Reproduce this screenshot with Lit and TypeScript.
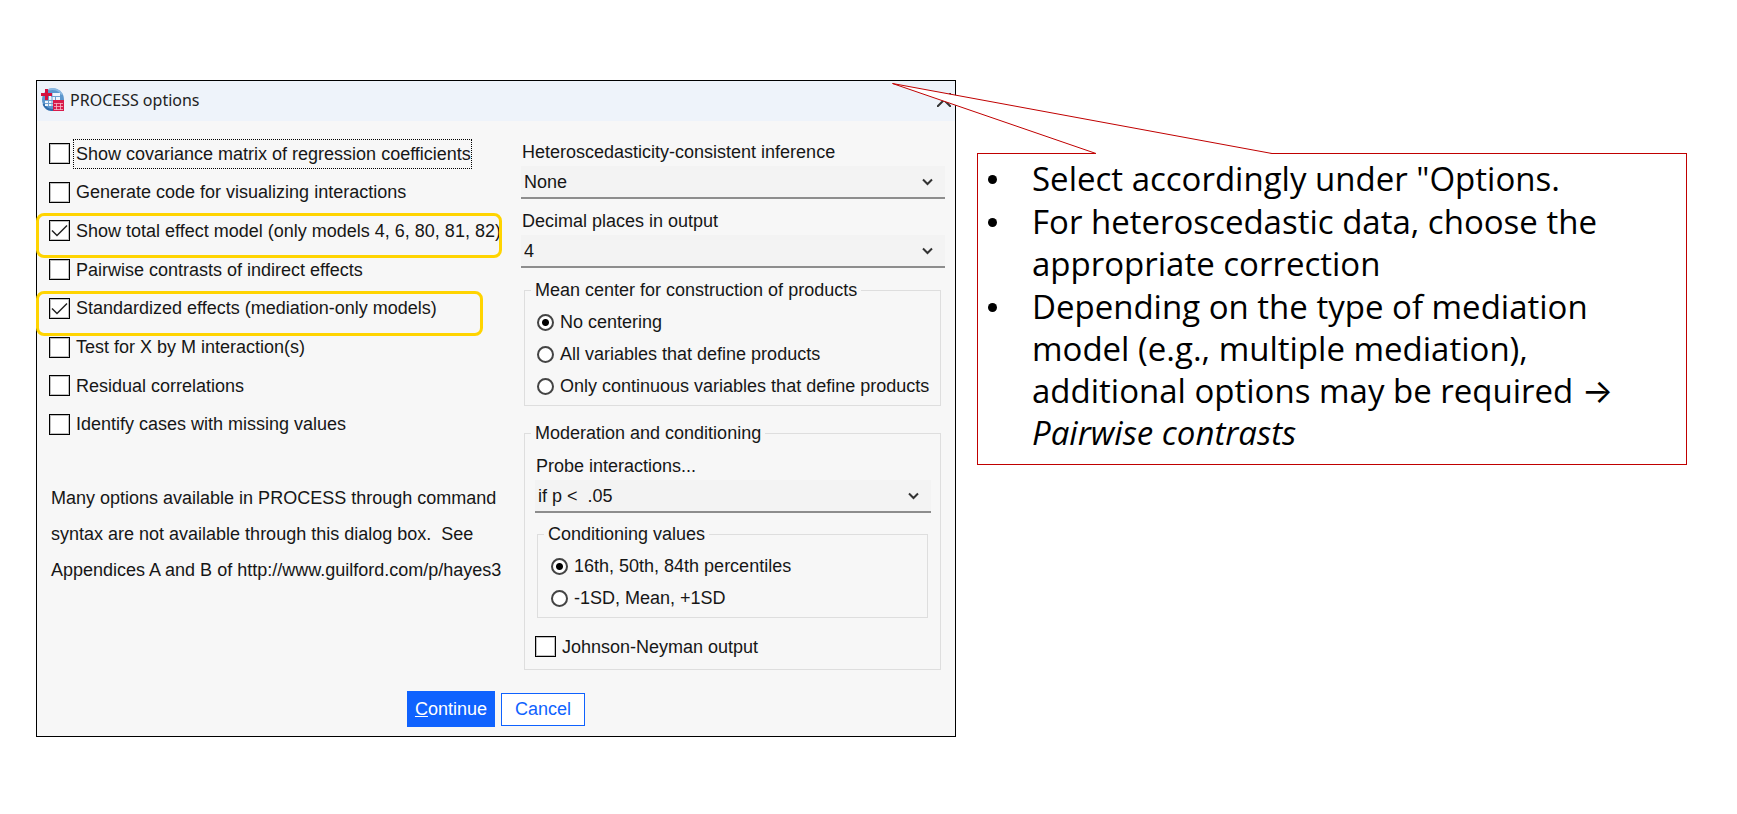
import { LitElement, html, css, svg } from "lit";
import { customElement } from "lit/decorators.js";

interface Choice {
  id: string;
  label: string;
  checked?: boolean;
  mark?: "wide" | "narrow";
  focused?: boolean;
}

const OPTIONS: Choice[] = [
  { id: "cov", label: "Show covariance matrix of regression coefficients", focused: true },
  { id: "code", label: "Generate code for visualizing interactions" },
  { id: "total", label: "Show total effect model (only models 4, 6, 80, 81, 82)", checked: true, mark: "wide" },
  { id: "pair", label: "Pairwise contrasts of indirect effects" },
  { id: "std", label: "Standardized effects (mediation-only models)", checked: true, mark: "narrow" },
  { id: "xm", label: "Test for X by M interaction(s)" },
  { id: "resid", label: "Residual correlations" },
  { id: "missing", label: "Identify cases with missing values" },
];

const CENTERING: Choice[] = [
  { id: "c-none", label: "No centering", checked: true },
  { id: "c-all", label: "All variables that define products" },
  { id: "c-cont", label: "Only continuous variables that define products" },
];

const CONDITIONING: Choice[] = [
  { id: "v-pct", label: "16th, 50th, 84th percentiles", checked: true },
  { id: "v-sd", label: "-1SD, Mean, +1SD" },
];

const NOTE = `Many options available in PROCESS through command
syntax are not available through this dialog box.  See
Appendices A and B of http://www.guilford.com/p/hayes3`;

const chevron = svg`<path d="M1 1.5 5.5 6 10 1.5" fill="none" stroke="#333" stroke-width="2"/>`;

@customElement("process-dialog")
export class ProcessDialog extends LitElement {
  static styles = css`
    :host {
      display: block;
      font: 18px/20px "Liberation Sans", Arial, sans-serif;
      color: #161616;
    }
    * { box-sizing: border-box; }
    .dialog { border: 1px solid #000; background: #f7f7f7; }
    .title {
      display: flex;
      align-items: center;
      gap: 6px;
      height: 40px;
      padding: 0 4px 3px;
      background: #eef3fa;
    }
    .title h1 {
      flex: 1;
      margin: 0;
      font: 16px/20px "Noto Sans", sans-serif;
      color: #222;
    }
    .close { display: flex; padding: 0; border: 0; background: none; }
    .body {
      display: grid;
      grid-template-columns: 472px minmax(0, 1fr);
      padding: 22px 10px 0 12px;
    }
    .options {
      display: flex;
      flex-direction: column;
      justify-content: space-between;
      min-height: 292px;
      margin: 0;
      padding: 0;
      list-style: none;
    }
    .row { position: relative; display: flex; align-items: center; gap: 4px; white-space: nowrap; }
    .row label { padding: 0 1px 0 2px; }
    .row .focused { margin: -5px 0 -5px -1px; padding: 4px 0 4px 2px; border: 1px dotted #000; }
    .mark {
      position: absolute;
      top: -7px;
      left: -13px;
      height: 45px;
      border: 3px solid #ffd400;
      border-radius: 8px;
      pointer-events: none;
    }
    .wide { width: 466px; }
    .narrow { width: 447px; }
    input { appearance: none; flex: none; margin: 0; background: #fff; }
    input[type="checkbox"] { width: 21px; height: 21px; border: 1px solid #000; box-shadow: inset 0 0 0 1px #8888; }
    input[type="checkbox"]:checked {
      background: #fff url('data:image/svg+xml,<svg xmlns="http://www.w3.org/2000/svg" viewBox="0 0 19 19"><path d="M2 9.5 7 14.500 17 4.500" fill="none" stroke="%23222" stroke-width="1.500"/></svg>');
    }
    input[type="radio"] {
      width: 17px;
      height: 17px;
      border: 2px solid #444;
      border-radius: 50%;
    }
    input[type="radio"]:checked { background: radial-gradient(circle, #000 3px, #fff 4px); }
    .note { margin: 45px 0 0 2px; line-height: 36px; white-space: pre; }
    .field { display: flex; flex-direction: column; }
    .field label { padding: 0 1px; }
    .field + .field { margin-top: 12px; }
    .select { position: relative; display: grid; margin-top: 4px; }
    .select svg { position: absolute; right: 12px; top: 12px; pointer-events: none; }
    select {
      appearance: none;
      height: 33px;
      margin: 0;
      padding: 0 3px;
      border: 0;
      border-bottom: 2px solid #8d8d8d;
      border-radius: 0;
      background: #f3f3f3;
      font: inherit;
      color: inherit;
    }
    .settings { margin-top: -1px; }
    fieldset {
      min-width: 0;
      margin: 12px 4px 0 3px;
      padding: 12px 8px 9px 12px;
      border: 1px solid #dedede;
    }
    legend { margin-left: -6px; padding: 0 4px; }
    .radios { display: flex; flex-direction: column; gap: 12px; }
    .moderation { margin-top: 17px; padding: 13px 9px 12px 10px; }
    .moderation > legend { margin-left: -4px; }
    .inner { margin: 11px 3px 18px 2px; padding: 12px 13px 9px; }
    .inner legend { margin-left: -7px; }
    .buttons { display: flex; align-items: center; justify-content: center; gap: 6px; padding: 21px 0 9px; }
    button { font: inherit; }
    .go { height: 36px; padding: 0 8px; border: 0; background: #0f62fe; color: #fff; }
    .stop { height: 33px; padding: 0 13px; border: 1px solid #0f62fe; background: #fff; color: #0f62fe; }
  `;

  private radios(name: string, items: Choice[]) {
    return html`<div class="radios">
      ${items.map((c) => html`<div class="row">
        <input type="radio" id=${c.id} name=${name} ?checked=${c.checked} /><label for=${c.id}>${c.label}</label>
      </div>`)}
    </div>`;
  }

  private field(id: string, label: string, value: string) {
    return html`<div class="field">
      <label for=${id}>${label}</label>
      <div class="select">
        <select id=${id}><option>${value}</option></select>
        <svg width="11" height="8" viewBox="0 0 11 8" aria-hidden="true">${chevron}</svg>
      </div>
    </div>`;
  }

  render() {
    return html`<section class="dialog">
      <header class="title">
        <svg width="23" height="23" viewBox="0 0 23 23" aria-hidden="true">
          <circle cx="12" cy="11.500" r="11" fill="#5b96cd" />
          <path d="M8 1.500a11 11 0 0 1 13 5" fill="none" stroke="#8ab8e2" stroke-width="2" />
          <path d="M2.500 16a10 10 0 0 0 10 6" fill="none" stroke="#2f6cab" stroke-width="2" />
          <path d="M8 5h11v7H12v6H4v-6h4z" fill="#eef4fb" />
          <path d="M4 12.500h9M4 15.500h9M7.500 10v8M11 5v13M14.500 9v3M10 8.500h9" stroke="#6d9fcf" />
          <path d="M5.500 1v11M0 6.500h11" stroke="#d5103f" stroke-width="3" />
          <rect x="12" y="12" width="11" height="11" fill="#d81b4a" />
          <path d="M13 15.500h9M13 18.500h9M13 21.500h9M15.500 15v7M19.500 15v7" stroke="#f6b9c8" stroke-width=".8" />
        </svg>
        <h1>PROCESS options</h1>
        <button class="close" aria-label="Close">
          <svg width="14" height="14" viewBox="0 0 14 14"><path d="M0 0 14 14M14 0 0 14" stroke="#333" stroke-width="2" /></svg>
        </button>
      </header>
      <div class="body">
        <div>
          <ul class="options">
            ${OPTIONS.map((o) => html`<li class="row">
              <input type="checkbox" id=${o.id} ?checked=${o.checked} /><label
                for=${o.id} class=${o.focused ? "focused" : ""}>${o.label}</label>
              ${o.mark ? html`<span class="mark ${o.mark}"></span>` : null}
            </li>`)}
          </ul>
          <p class="note">${NOTE}</p>
        </div>
        <div class="settings">
          ${this.field("hc", "Heteroscedasticity-consistent inference", "None")}
          ${this.field("dec", "Decimal places in output", "4")}
          <fieldset>
            <legend>Mean center for construction of products</legend>
            ${this.radios("centering", CENTERING)}
          </fieldset>
          <fieldset class="moderation">
            <legend>Moderation and conditioning</legend>
            ${this.field("probe", "Probe interactions...", "if p <\u00a0 .05")}
            <fieldset class="inner">
              <legend>Conditioning values</legend>
              ${this.radios("conditioning", CONDITIONING)}
            </fieldset>
            <div class="row"><input type="checkbox" id="jn" /><label for="jn">Johnson-Neyman output</label></div>
          </fieldset>
        </div>
      </div>
      <footer class="buttons">
        <button class="go"><u>C</u>ontinue</button>
        <button class="stop">Cancel</button>
      </footer>
    </section>`;
  }
}

@customElement("app-root")
export class AppRoot extends LitElement {
  static styles = css`
    :host { display: block; min-height: 100vh; background: #fff; }
    * { box-sizing: border-box; }
    .slide {
      display: grid;
      grid-template-columns: 920px minmax(0, 1fr);
      align-items: start;
      gap: 21px;
      padding: 80px 50px 0 36px;
    }
    .callout {
      position: relative;
      margin-top: 73px;
      padding: 4px 40px 10px 54px;
      border: 1px solid #c00000;
      background: #fff;
      color: #000;
      font: 33px/42px "Open Sans", Inter, sans-serif;
    }
    .callout ul { display: grid; gap: 1px; margin: 0; padding: 0; list-style: none; }
    .callout li { position: relative; }
    .callout li::before {
      content: "";
      position: absolute;
      left: -44px;
      top: 17px;
      width: 9px;
      height: 9px;
      border-radius: 50%;
      background: #000;
    }
    .tail { position: absolute; left: -86px; top: -71px; pointer-events: none; }
  `;

  render() {
    return html`<main class="slide">
      <process-dialog></process-dialog>
      <aside class="callout">
        <svg class="tail" width="382" height="72" viewBox="0 0 382 72" aria-hidden="true">
          <path d="M204 70.500V72H380V70.500L0.500 0.500Z" fill="#fff" />
          <path d="M204 70.500 0.500 0.500 380 70.500" fill="none" stroke="#c00000" />
        </svg>
        <ul>
          <li>Select accordingly under "Options.</li>
          <li>For heteroscedastic data, choose the appropriate correction</li>
          <li>Depending on the type of mediation model (e.g., multiple mediation), additional options may be required → <em>Pairwise contrasts</em></li>
        </ul>
      </aside>
    </main>`;
  }
}
